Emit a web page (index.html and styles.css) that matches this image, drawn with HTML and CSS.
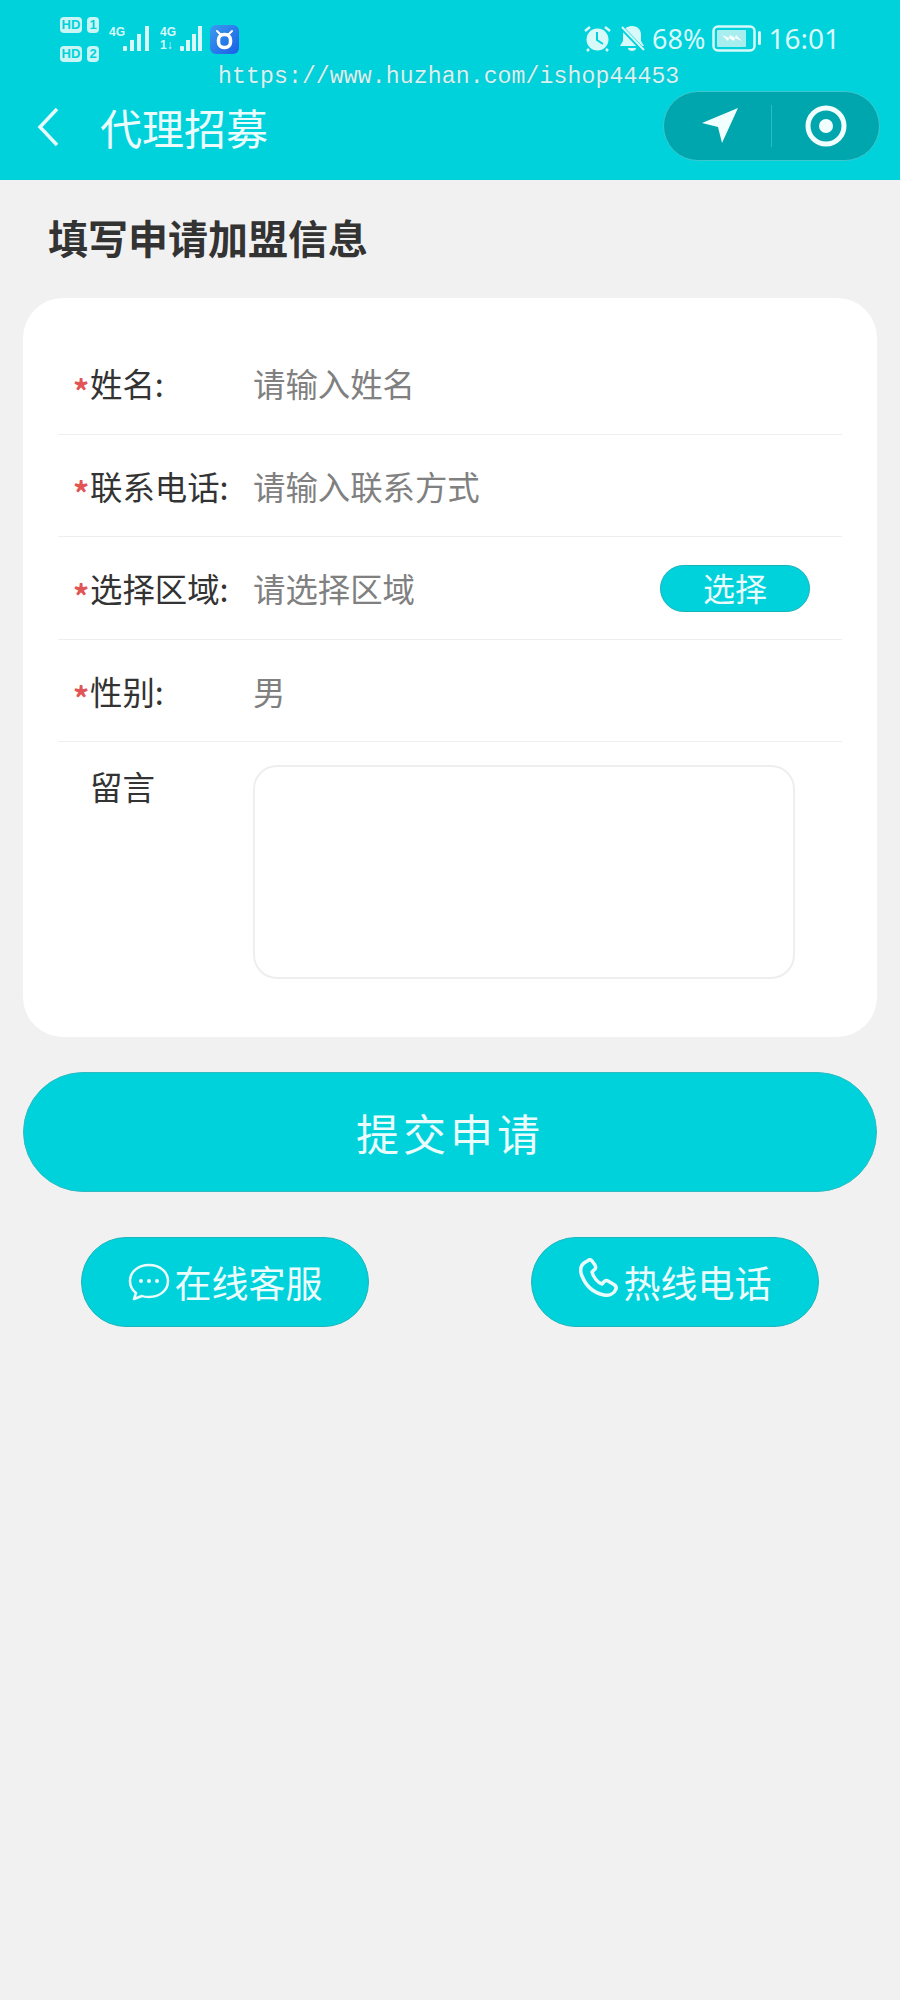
FILE: index.html
```html
<!DOCTYPE html>
<html lang="zh-CN">
<head>
    <meta charset="UTF-8">
    <meta name="viewport" content="width=device-width, initial-scale=1.0">
    <title>代理招募</title>
    <link rel="stylesheet" href="styles.css">
</head>
<body>
    <div class="header">
        <div class="status-bar">
            <div class="status-left">
                <div class="sim-list">
                    <div class="sim"><span class="hd">HD</span><span class="sim-no">1</span></div>
                    <div class="sim"><span class="hd">HD</span><span class="sim-no">2</span></div>
                </div>
                <div class="signal signal-first">
                    <span class="net">4G</span>
                    <svg class="bars" width="28" height="26" viewBox="0 0 28 26"><rect x="0" y="20" width="4" height="5" rx="1"/><rect x="7" y="14" width="4" height="11"/><rect x="14" y="8" width="4" height="17"/><rect x="22" y="0" width="4" height="25"/></svg>
                </div>
                <div class="signal signal-second">
                    <span class="net net-double">4G<br>1↓</span>
                    <svg class="bars" width="23" height="26" viewBox="0 0 23 26"><rect x="0" y="20" width="4" height="5" rx="1"/><rect x="6" y="14" width="4" height="11"/><rect x="12" y="8" width="4" height="17"/><rect x="18" y="0" width="4" height="25"/></svg>
                </div>
                <svg class="app-icon" width="29" height="29" viewBox="0 0 29 29">
                    <defs><linearGradient id="appBlue" x1="0" y1="0" x2="1" y2="1"><stop offset="0" stop-color="#3a9bee"/><stop offset="1" stop-color="#1a5fe6"/></linearGradient></defs>
                    <rect width="29" height="29" rx="6" fill="url(#appBlue)"/>
                    <path d="M7 6l3 3h9l3-3" fill="none" stroke="#fff" stroke-width="2" stroke-linecap="round"/>
                    <rect x="8.500" y="9.500" width="12" height="13" rx="5.500" fill="none" stroke="#fff" stroke-width="3.500"/>
                </svg>
            </div>
            <div class="status-right">
                <svg class="alarm" width="29" height="27" viewBox="0 0 29 27">
                    <circle cx="14.500" cy="14.500" r="11" fill="#d8f9f9"/>
                    <path d="M14 7v8l6 4" fill="none" stroke="#00d2dc" stroke-width="2"/>
                    <path d="M2 6l5-4M27 6l-5-4M6 24l-2 2M23 24l2 2" stroke="#d8f9f9" stroke-width="2.500" fill="none"/>
                </svg>
                <svg class="bell" width="26" height="27" viewBox="0 0 26 27">
                    <path d="M13 1c-6 0-9 4-9 9v6l-3 5h24l-3-5v-6c0-5-3-9-9-9z" fill="#d8f9f9"/>
                    <path d="M9 23h8c0 2-2 3-4 3s-4-1-4-3z" fill="#d8f9f9"/>
                    <path d="M3 3l21 22" stroke="#00d2dc" stroke-width="4.500"/>
                    <path d="M3 2l22 23" stroke="#d8f9f9" stroke-width="2"/>
                </svg>
                <span class="percent">68%</span>
                <svg class="battery" width="50" height="27" viewBox="0 0 50 27">
                    <rect x="1.500" y="1.500" width="41" height="24" rx="4.500" fill="none" stroke="#d8f9f9" stroke-width="2.500"/>
                    <rect x="5" y="5" width="29" height="17" rx="1" fill="#a8eeee"/>
                    <path d="M10 10l7 3 1-3 5 3 1-3 6 6-7-3-1 3-5-3-1 3z" fill="#fff"/>
                    <rect x="46" y="6" width="3" height="14" rx="1.500" fill="#d8f9f9"/>
                </svg>
                <span class="clock">16:01</span>
            </div>
        </div>
        <div class="nav-bar">
            <svg class="back" width="22" height="40" viewBox="0 0 22 40"><path d="M20 2L3 20l17 18" fill="none" stroke="#e6fbfb" stroke-width="3.500"/></svg>
            <span class="nav-title">代理招募</span>
            <div class="capsule">
                <div class="capsule-cell capsule-cell-nav">
                    <svg width="38" height="36" viewBox="0 0 38 36"><path d="M37 0L1 15l16 4 4 16z" fill="#f2ffff"/></svg>
                </div>
                <div class="capsule-line"></div>
                <div class="capsule-cell">
                    <svg width="42" height="42" viewBox="0 0 42 42"><circle cx="21" cy="21" r="18" fill="none" stroke="#f2ffff" stroke-width="5"/><circle cx="21" cy="21" r="7" fill="#f2ffff"/></svg>
                </div>
            </div>
        </div>
        <div class="watermark">https://www.huzhan.com/ishop44453</div>
    </div>

    <h1 class="page-title">填写申请加盟信息</h1>

    <div class="card">
        <div class="row">
            <span class="star">*</span>
            <span class="label">姓名:</span>
            <span class="value">请输入姓名</span>
        </div>
        <div class="row">
            <span class="star">*</span>
            <span class="label">联系电话:</span>
            <span class="value">请输入联系方式</span>
        </div>
        <div class="row">
            <span class="star">*</span>
            <span class="label">选择区域:</span>
            <span class="value">请选择区域</span>
            <button class="pick-btn">选择</button>
        </div>
        <div class="row">
            <span class="star">*</span>
            <span class="label">性别:</span>
            <span class="value">男</span>
        </div>
        <div class="row row-message">
            <span class="label label-message">留言</span>
            <textarea class="message-box"></textarea>
        </div>
    </div>

    <button class="submit-btn">提交申请</button>

    <div class="contact">
        <button class="contact-btn">
            <svg width="42" height="38" viewBox="0 0 42 38"><path d="M21 2C10 2 2 9 2 18c0 5 2 9 6 12l-2 6 8-3c2 1 5 1 7 1 11 0 19-7 19-16S32 2 21 2z" fill="none" stroke="#eafcfc" stroke-width="2.500" stroke-linejoin="round"/><circle cx="13" cy="18" r="2" fill="#eafcfc"/><circle cx="21" cy="18" r="2" fill="#eafcfc"/><circle cx="29" cy="18" r="2" fill="#eafcfc"/></svg>
            <span>在线客服</span>
        </button>
        <button class="contact-btn">
            <svg class="phone-icon" width="40" height="40" viewBox="0 0 40 40"><path d="M10 2L5 5C1 8 1 13 3 18c4 10 12 17 22 19 5 1 10-1 12-6 1-3-1-4-3-5l-5-3c-2-1-4 0-5 2l-1 1c-4-1-9-7-10-12l2-2c2-1 2-3 1-5l-3-4c-1-1-2-2-3-1z" fill="none" stroke="#eafcfc" stroke-width="3.500" stroke-linejoin="round"/></svg>
            <span>热线电话</span>
        </button>
    </div>
</body>
</html>
```

FILE: styles.css
```css
* {
    box-sizing: border-box;
}
body {
    font-family: "Noto Sans CJK SC", "Noto Sans", sans-serif;
    margin: 0;
    padding: 0;
    min-height: 2000px;
    background-color: #f1f1f1;
    color: #333;
}
button {
    font-family: inherit;
    padding: 0;
    cursor: pointer;
}
.header {
    position: relative;
    height: 180px;
    background-color: #00d2dc;
}
.status-bar {
    display: flex;
    justify-content: space-between;
    height: 90px;
    padding: 17px 60px 0 60px;
    color: #d8f9f9;
}
.status-left,
.status-right {
    display: flex;
    align-items: flex-start;
}
.sim-list {
    display: flex;
    flex-direction: column;
    gap: 13px;
}
.sim {
    display: flex;
    gap: 5px;
    height: 16px;
}
.hd,
.sim-no {
    display: block;
    height: 16px;
    background-color: #c9f5f5;
    border-radius: 4px;
    color: #00d2dc;
    font-family: "Liberation Sans", sans-serif;
    font-size: 13px;
    font-weight: bold;
    line-height: 16px;
    text-align: center;
}
.hd {
    width: 22px;
}
.sim-no {
    width: 12px;
}
.signal {
    display: flex;
    align-items: flex-start;
    margin-top: 9px;
}
.signal-first {
    margin-left: 10px;
}
.signal-second {
    margin-left: 9px;
}
.net {
    width: 14px;
    font-family: "Liberation Sans", sans-serif;
    font-size: 12px;
    font-weight: bold;
    line-height: 13px;
    white-space: nowrap;
}
.net-double {
    width: 20px;
}
.bars {
    fill: #d8f9f9;
}
.app-icon {
    margin: 8px 0 0 7px;
}
.status-right {
    padding-top: 8px;
}
.alarm {
    margin-right: 7px;
}
.bell {
    margin-right: 7px;
}
.percent,
.clock {
    font-family: "Noto Sans", sans-serif;
    font-size: 28px;
    line-height: 27px;
}
.percent {
    margin-right: 7px;
    font-size: 27px;
}
.clock {
    margin-left: 6px;
}
.nav-bar {
    display: flex;
    align-items: center;
    height: 90px;
    padding: 0 20px 18px 37px;
}
.back {
    margin-top: 2px;
}
.nav-title {
    margin-left: 41px;
    color: #eafcfc;
    font-size: 42px;
    line-height: 50px;
    margin-top: 2px;
}
.capsule {
    display: flex;
    align-items: center;
    width: 217px;
    height: 70px;
    margin-left: auto;
    background-color: #00a6ae;
    border: 1px solid #3cc8cf;
    border-radius: 35px;
}
.capsule-cell {
    flex: 1;
    display: flex;
    justify-content: center;
    align-items: center;
}
.capsule-cell-nav {
    flex: 0 0 107px;
    padding-left: 5px;
}
.capsule-line {
    width: 1px;
    height: 42px;
    background-color: #2bbcc3;
}
.watermark {
    position: absolute;
    top: 63px;
    left: 218px;
    color: #d5f4f5;
    font-family: "Liberation Mono", monospace;
    font-size: 23.300px;
    line-height: 28px;
    text-shadow: 0 0 1px #3a98a0;
    white-space: nowrap;
}
.page-title {
    margin: 0;
    padding: 36px 0 40px 48px;
    color: #333;
    font-size: 40px;
    font-weight: bold;
    line-height: 42px;
}
.card {
    margin: 0 23px;
    padding: 34px 35px 58px;
    background-color: #fff;
    border-radius: 40px;
}
.row {
    display: flex;
    align-items: center;
    height: 102.500px;
    padding: 0 32px 0 15px;
    border-bottom: 1.500px solid #eeeeee;
}
.star {
    width: 17px;
    margin-top: 14px;
    color: #e25555;
    font-size: 32px;
    font-weight: bold;
    line-height: 30px;
}
.label {
    width: 163px;
    font-size: 32.400px;
    white-space: nowrap;
}
.value {
    color: #808080;
    font-size: 32.400px;
}
.pick-btn {
    width: 150px;
    height: 47px;
    margin-top: 2px;
    margin-left: auto;
    padding-bottom: 3px;
    background-color: #00d2dc;
    border: 1px solid #17b3bb;
    border-radius: 24px;
    color: #eafcfc;
    font-size: 32px;
    line-height: 40px;
}
.row-message {
    align-items: flex-start;
    height: auto;
    padding: 23px 0 0 32px;
    border-bottom: none;
}
.label-message {
    width: 163px;
    line-height: 42px;
}
.message-box {
    display: block;
    width: 542px;
    height: 214px;
    background-color: #fff;
    border: 2px solid #eeeeee;
    border-radius: 24px;
    resize: none;
}
.submit-btn {
    display: block;
    width: 854px;
    height: 120px;
    margin: 35px 23px 0;
    background-color: #00d2dc;
    border: 1px solid #2ebcc3;
    border-radius: 60px;
    color: #eafcfc;
    font-size: 43px;
    letter-spacing: 4px;
}
.contact {
    display: flex;
    justify-content: space-between;
    margin-top: 45px;
    padding: 0 81px;
}
.contact-btn {
    display: flex;
    align-items: center;
    justify-content: center;
    gap: 5px;
    width: 288px;
    height: 90px;
    background-color: #00d2dc;
    border: 1px solid #1bb5bd;
    border-radius: 45px;
    color: #eafcfc;
    font-size: 37px;
}
.phone-icon {
    margin-bottom: 8px;
}
```
